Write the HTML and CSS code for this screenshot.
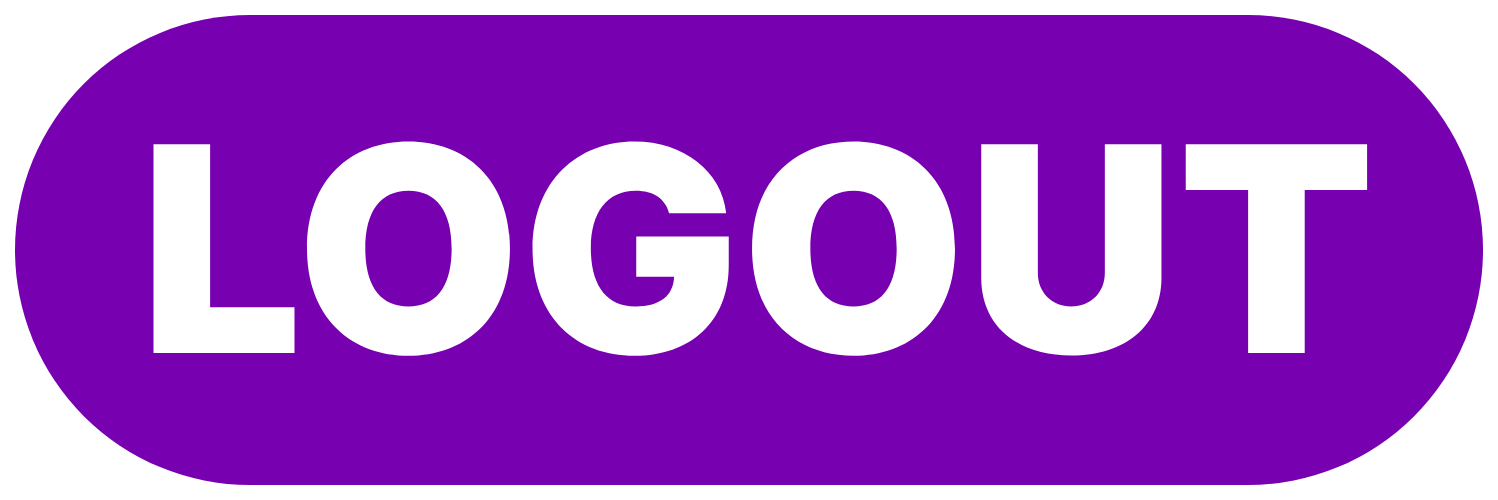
FILE: index.html
```html
<!DOCTYPE html>
<html>
<head>
<meta charset="utf-8">
<link rel="stylesheet" href="styles.css">
</head>
<body>
<div class="page">
  <button class="logout-btn" type="button">LOGOUT</button>
</div>
</body>
</html>
```
FILE: styles.css
```css
html, body {
  margin: 0;
  padding: 0;
  background: #ffffff;
}
.page {
  padding: 15px;
  display: flex;
}
.logout-btn {
  width: 1468px;
  height: 470px;
  border: none;
  border-radius: 235px;
  background: #7700b0;
  color: #ffffff;
  font-family: Inter, "Liberation Sans", sans-serif;
  font-weight: 900;
  font-size: 287px;
  letter-spacing: 3px;
  line-height: 1;
  display: flex;
  align-items: center;
  justify-content: center;
  padding: 0 0 4px 20px;
  cursor: pointer;
}
```
